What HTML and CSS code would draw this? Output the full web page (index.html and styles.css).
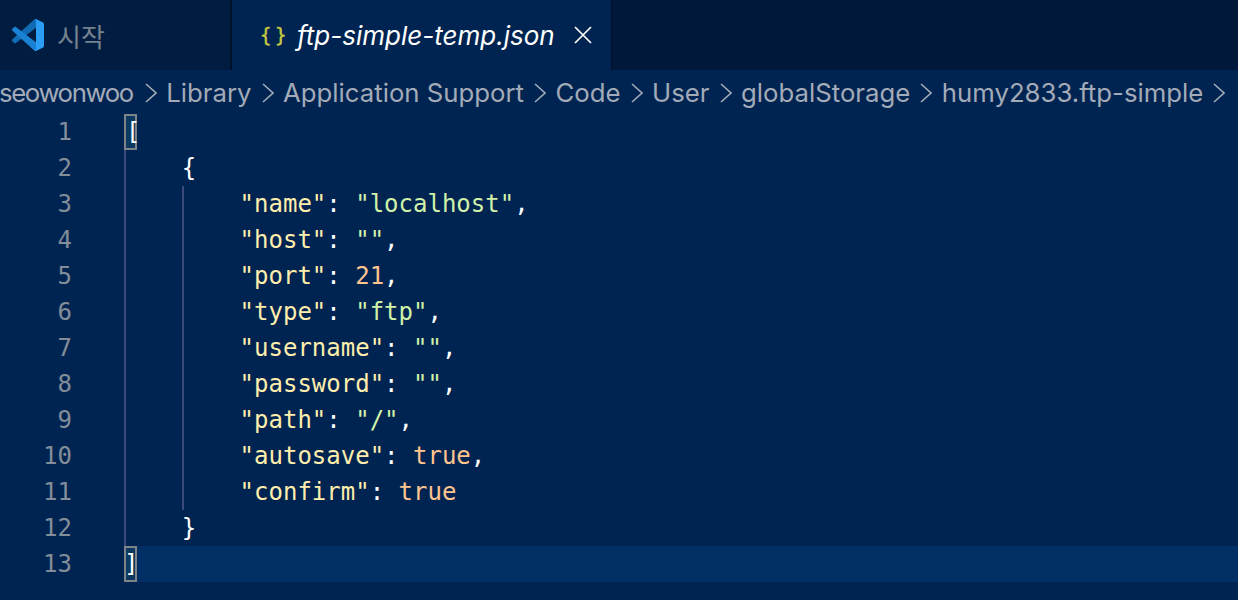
FILE: index.html
```html
<!DOCTYPE html>
<html lang="ko">
<head>
<meta charset="utf-8">
<title>ftp-simple-temp.json</title>
<link rel="stylesheet" href="styles.css">
</head>
<body>
<div class="tabs">
  <div class="tab start">
    <svg class="logo" viewBox="0 0 100 100" width="32" height="32"><path fill="#0f6cb5" d="M96.46 10.8L75.86.88C73.47-.27 70.62.21 68.75 2.08L1.3 63.58c-1.82 1.66-1.82 4.52 0 6.17l5.51 5.01c1.49 1.35 3.72 1.45 5.32.24L93.36 13.37C96.08 11.31 100 13.25 100 16.67v-.24c0-2.4-1.37-4.6-3.54-5.63Z"/><path fill="#1a82d4" d="M96.46 89.2L75.86 99.12c-2.39 1.15-5.24.67-7.11-1.2L1.3 36.42c-1.82-1.66-1.82-4.52 0-6.17l5.51-5.01c1.49-1.35 3.72-1.45 5.32-.24L93.36 86.63C96.08 88.69 100 86.75 100 83.33v.24c0 2.4-1.37 4.6-3.54 5.63Z"/><path fill="#2a9df4" d="M75.86 99.13c-2.39 1.15-5.24.66-7.11-1.21C71.06 100.22 75 98.59 75 95.33V4.67c0-3.26-3.94-4.89-6.25-2.59C70.62.21 73.47-.27 75.86.87l20.6 9.91C98.62 11.82 100 14.01 100 16.41v67.18c0 2.4-1.38 4.59-3.54 5.63Z"/></svg>
    <span class="start-label">시작</span>
  </div>
  <div class="tab active">
    <span class="json-icon">{ }</span>
    <span class="file-name">ftp-simple-temp.json</span>
    <svg class="close" viewBox="0 0 18 18" width="18" height="18"><path d="M1 1 L17 17 M17 1 L1 17" stroke="#fff" stroke-width="1.7" fill="none"/></svg>
  </div>
</div>
<div class="crumbs">
  <span class="first">seowonwoo</span><svg class="sep" viewBox="0 0 12 20"><path d="M1 1 L11 10 L1 19"/></svg><span>Library</span><svg class="sep" viewBox="0 0 12 20"><path d="M1 1 L11 10 L1 19"/></svg><span>Application Support</span><svg class="sep" viewBox="0 0 12 20"><path d="M1 1 L11 10 L1 19"/></svg><span>Code</span><svg class="sep" viewBox="0 0 12 20"><path d="M1 1 L11 10 L1 19"/></svg><span>User</span><svg class="sep" viewBox="0 0 12 20"><path d="M1 1 L11 10 L1 19"/></svg><span>globalStorage</span><svg class="sep" viewBox="0 0 12 20"><path d="M1 1 L11 10 L1 19"/></svg><span>humy2833.ftp-simple</span><svg class="sep" viewBox="0 0 12 20"><path d="M1 1 L11 10 L1 19"/></svg>
</div>
<div class="editor">
  <div class="line"><span class="num">1</span><span class="code"><span class="bracket">[</span></span></div>
  <div class="line"><span class="num">2</span><span class="code">    {</span></div>
  <div class="line"><span class="num">3</span><span class="code">        <span class="k">"name"</span>: <span class="s">"localhost"</span>,</span></div>
  <div class="line"><span class="num">4</span><span class="code">        <span class="k">"host"</span>: <span class="s">""</span>,</span></div>
  <div class="line"><span class="num">5</span><span class="code">        <span class="k">"port"</span>: <span class="n">21</span>,</span></div>
  <div class="line"><span class="num">6</span><span class="code">        <span class="k">"type"</span>: <span class="s">"ftp"</span>,</span></div>
  <div class="line"><span class="num">7</span><span class="code">        <span class="k">"username"</span>: <span class="s">""</span>,</span></div>
  <div class="line"><span class="num">8</span><span class="code">        <span class="k">"password"</span>: <span class="s">""</span>,</span></div>
  <div class="line"><span class="num">9</span><span class="code">        <span class="k">"path"</span>: <span class="s">"/"</span>,</span></div>
  <div class="line"><span class="num">10</span><span class="code">        <span class="k">"autosave"</span>: <span class="n">true</span>,</span></div>
  <div class="line"><span class="num">11</span><span class="code">        <span class="k">"confirm"</span>: <span class="n">true</span></span></div>
  <div class="line"><span class="num">12</span><span class="code">    }</span></div>
  <div class="line current"><span class="num">13</span><span class="code"><span class="bracket closing">]</span></span></div>
  <span class="guide g1"></span>
  <span class="guide g2"></span>
</div>
</body>
</html>
```
FILE: styles.css
```css
* { box-sizing: border-box; }
html, body { margin: 0; height: 100%; overflow: hidden; }
body { background: #002451; color: #fff; font-family: Inter, "Noto Sans CJK KR", sans-serif; }
.tabs { display: flex; height: 70px; background: #00183a; }
.tab { display: flex; align-items: center; height: 70px; }
.start { width: 232px; background: #001c40; padding-left: 12px; border-right: 2px solid #00122b; }
.logo { margin-right: 13px; flex: none; }
.start-label { font-family: "Noto Sans CJK KR", sans-serif; font-size: 26px; font-weight: 400; color: #76828f; }
.active { width: 380px; background: #002451; padding-left: 28px; border-right: 1px solid #00122b; }
.json-icon { font-family: "DejaVu Sans Mono", monospace; font-size: 19px; -webkit-text-stroke: 0.4px #cbcb41; color: #cbcb41; width: 37px; white-space: pre; letter-spacing: -4px; flex: none; }
.file-name { font-size: 26px; font-style: italic; flex: none; width: 277px; white-space: nowrap; }
.close { flex: none; }
.crumbs { display: flex; align-items: center; height: 44px; padding-top: 1px; margin-left: -1px; font-size: 25.75px; color: #a3abb8; white-space: nowrap; }
.first { letter-spacing: -1.4px; margin-right: 2px; }
.sep { width: 12px; height: 20px; margin: 0 9.5px 0 10px; flex: none; }
.sep path { fill: none; stroke: #a3abb8; stroke-width: 1.6; }
.editor { position: relative; }
.line { display: flex; height: 36px; line-height: 36px; font-family: "DejaVu Sans Mono", monospace; font-size: 24px; white-space: pre; }
.num { width: 72px; text-align: right; color: #838d9a; flex: none; }
.code { margin-left: 52px; flex: 1; }
.current .code { background: #003066; }
.bracket { display: inline-block; width: 13px; height: 36px; border: 2px solid #808488; background: #0b3a60; line-height: 32px; vertical-align: top; }
.closing { text-indent: -2px; }
.k { color: #ffeead; }
.s { color: #d1f1a9; }
.n { color: #ffc58f; }
.guide { position: absolute; width: 2px; background: #3a4a78; }
.g1 { left: 124px; top: 36px; height: 396px; }
.g2 { left: 182px; top: 72px; height: 324px; }
```
